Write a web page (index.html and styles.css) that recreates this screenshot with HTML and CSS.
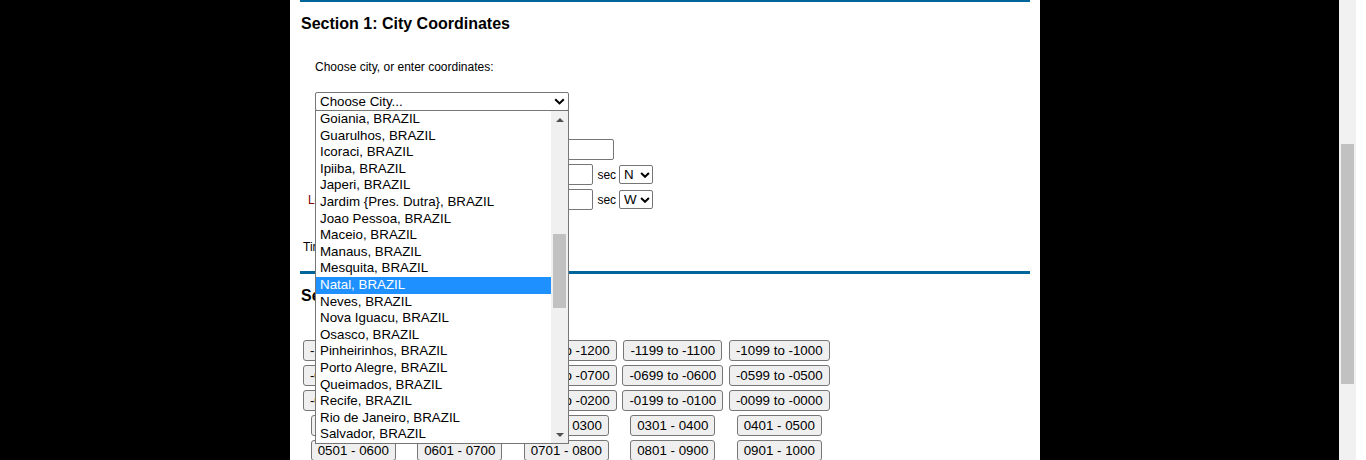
FILE: index.html
```html
<!DOCTYPE html>
<html>
<head>
<meta charset="utf-8">
<title>City Coordinates</title>
<link rel="stylesheet" href="styles.css">
</head>
<body>
<div class="gutter"></div>
<main class="page">
  <section class="sec sec1">
    <h2 class="sec-title">Section 1: City Coordinates</h2>
    <p class="hint">Choose city, or enter coordinates:</p>
    <div class="city-pick">
      <select class="city-select"><option>Choose City...</option></select>
      <svg class="chev chev-big" width="11" height="7" viewBox="0 0 11 7" aria-hidden="true"><path d="M1.2 1.2 L5.5 5.4 L9.8 1.2" fill="none" stroke="#000" stroke-width="2.1"/></svg>
      <div class="dropdown">
        <ul class="opts">
          <li>Goiania, BRAZIL</li>
          <li>Guarulhos, BRAZIL</li>
          <li>Icoraci, BRAZIL</li>
          <li>Ipiiba, BRAZIL</li>
          <li>Japeri, BRAZIL</li>
          <li>Jardim {Pres. Dutra}, BRAZIL</li>
          <li>Joao Pessoa, BRAZIL</li>
          <li>Maceio, BRAZIL</li>
          <li>Manaus, BRAZIL</li>
          <li>Mesquita, BRAZIL</li>
          <li class="sel">Natal, BRAZIL</li>
          <li>Neves, BRAZIL</li>
          <li>Nova Iguacu, BRAZIL</li>
          <li>Osasco, BRAZIL</li>
          <li>Pinheirinhos, BRAZIL</li>
          <li>Porto Alegre, BRAZIL</li>
          <li>Queimados, BRAZIL</li>
          <li>Recife, BRAZIL</li>
          <li>Rio de Janeiro, BRAZIL</li>
          <li>Salvador, BRAZIL</li>
        </ul>
        <div class="list-scroll">
          <div class="arrow-box"><span class="tri up"></span></div>
          <div class="track"><div class="thumb"></div></div>
          <div class="arrow-box"><span class="tri down"></span></div>
        </div>
      </div>
    </div>
    <div class="coords">
      <label class="lbl">Name:</label>
      <div class="fields"><input class="txt wide" type="text"></div>
      <label class="lbl">Latitude:</label>
      <div class="fields">
        <input class="txt num" type="text"><span>deg</span>
        <input class="txt num" type="text"><span>min</span>
        <input class="txt num" type="text"><span>sec</span>
        <span class="hemi-wrap">
          <select class="hemi"><option>N</option><option>S</option></select>
          <svg class="chev chev-small" width="10" height="6" viewBox="0 0 10 6" aria-hidden="true"><path d="M1.1 1.1 L5 4.8 L8.9 1.1" fill="none" stroke="#000" stroke-width="2"/></svg>
        </span>
      </div>
      <label class="lbl">Longitude:</label>
      <div class="fields">
        <input class="txt num" type="text"><span>deg</span>
        <input class="txt num" type="text"><span>min</span>
        <input class="txt num" type="text"><span>sec</span>
        <span class="hemi-wrap">
          <select class="hemi"><option>W</option><option>E</option></select>
          <svg class="chev chev-small" width="10" height="6" viewBox="0 0 10 6" aria-hidden="true"><path d="M1.1 1.1 L5 4.8 L8.9 1.1" fill="none" stroke="#000" stroke-width="2"/></svg>
        </span>
      </div>
    </div>
    <p class="tz">Time Zone (hours from GMT): -0300</p>
  </section>
  <section class="sec sec2">
    <h2 class="sec-title">Section 2: Time Zone Offset</h2>
    <div class="zones">
      <button>-1499 to -1400</button>
      <button>-1399 to -1300</button>
      <button>-1299 to -1200</button>
      <button>-1199 to -1100</button>
      <button>-1099 to -1000</button>
      <button>-0999 to -0900</button>
      <button>-0899 to -0800</button>
      <button>-0799 to -0700</button>
      <button>-0699 to -0600</button>
      <button>-0599 to -0500</button>
      <button>-0499 to -0400</button>
      <button>-0399 to -0300</button>
      <button>-0299 to -0200</button>
      <button>-0199 to -0100</button>
      <button>-0099 to -0000</button>
      <button>0001 - 0100</button>
      <button>0101 - 0200</button>
      <button>0201 - 0300</button>
      <button>0301 - 0400</button>
      <button>0401 - 0500</button>
      <button>0501 - 0600</button>
      <button>0601 - 0700</button>
      <button>0701 - 0800</button>
      <button>0801 - 0900</button>
      <button>0901 - 1000</button>
    </div>
  </section>
</main>
<div class="gutter grow"></div>
<div class="vscroll"><div class="vthumb"></div></div>
<div class="edge"></div>
</body>
</html>
```

FILE: styles.css
```css
* { box-sizing: border-box; }

html, body {
  margin: 0;
  height: 460px;
  overflow: hidden;
}

body {
  display: flex;
  background: #000;
  font-family: "Liberation Sans", Arial, sans-serif;
  font-size: 12px;
  color: #000;
}

.gutter { width: 290px; flex: none; background: #000; }
.gutter.grow { width: auto; flex: 1; }

.page {
  width: 750px;
  flex: none;
  background: #fff;
  padding: 0 10px;
  height: 460px;
  overflow: hidden;
}

.vscroll {
  width: 17px;
  flex: none;
  background: #f1f1f1;
  padding: 144px 2px 0;
}
.vthumb { height: 240px; background: #c1c1c1; }

.edge { width: 10px; flex: none; background: #fff; }

.sec { border-top: 3px solid #006699; }
.sec1 { margin-top: -1px; padding-bottom: 17px; }

.sec-title {
  margin: 13px 0 0 1px;
  font-size: 16px;
  line-height: 18px;
  font-weight: bold;
  color: #000;
}

.hint {
  margin: 27px 0 0 15px;
  line-height: 14px;
}

select, input, button {
  font-family: "Liberation Sans", Arial, sans-serif;
  font-size: 13.333px;
  color: #000;
}

.city-pick {
  position: relative;
  margin: 18px 0 0 15px;
  width: 254px;
  height: 19px;
}

.city-select {
  -webkit-appearance: none;
  appearance: none;
  display: block;
  width: 254px;
  height: 19px;
  padding: 0 0 0 4px;
  border: 1px solid #767676;
  border-radius: 2px;
  background: #fff;
  line-height: 17px;
}

.chev {
  position: absolute;
  pointer-events: none;
}
.chev-big { right: 4px; top: 6px; }
.chev-small { right: 3px; top: 7px; }

.dropdown {
  position: absolute;
  left: 0;
  top: 18px;
  width: 254px;
  height: 334px;
  border: 1px solid #767676;
  background: #fff;
  display: flex;
  z-index: 5;
}

.opts {
  list-style: none;
  margin: 0;
  padding: 0;
  flex: 1;
  font-size: 13.333px;
  overflow: hidden;
}
.opts li {
  height: 16.6px;
  line-height: 16.6px;
  padding-left: 4px;
  white-space: nowrap;
}
.opts li.sel { background: #1e90ff; color: #fff; }

.list-scroll {
  width: 17px;
  background: #f0f0f0;
  display: flex;
  flex-direction: column;
}
.arrow-box {
  height: 17px;
  display: flex;
  align-items: center;
  justify-content: center;
}
.tri {
  width: 0;
  height: 0;
  border-left: 4px solid transparent;
  border-right: 4px solid transparent;
}
.tri.up { border-bottom: 4px solid #505050; margin-top: 1px; }
.tri.down { border-top: 4px solid #505050; margin-top: 1px; }
.track { flex: 1; padding: 106px 2px 0; }
.thumb { height: 74px; background: #c1c1c1; }

.coords {
  margin-top: 28px;
  display: grid;
  grid-template-columns: 64px auto;
  column-gap: 12px;
  row-gap: 4px;
  grid-auto-rows: 21px;
}
.lbl {
  color: #800000;
  text-align: right;
  align-self: center;
  line-height: 14px;
  white-space: nowrap;
}
.fields {
  display: flex;
  align-items: center;
  gap: 4px;
}
.txt {
  height: 21px;
  border: 1px solid #767676;
  border-radius: 2px;
  padding: 1px 2px;
  background: #fff;
}
.txt.wide { width: 238px; }
.txt.num { width: 54px; }

.hemi-wrap {
  position: relative;
  display: block;
  margin-left: -1px;
}
.hemi {
  -webkit-appearance: none;
  appearance: none;
  display: block;
  width: 34px;
  height: 19px;
  border: 1px solid #767676;
  border-radius: 2px;
  padding: 0 0 0 4px;
  background: #fff;
  line-height: 17px;
}

.tz {
  margin: 30px 0 0 3px;
  line-height: 14px;
}

.zones {
  margin-top: 35px;
  display: grid;
  grid-template-columns: repeat(5, 106.5px);
  justify-items: center;
  row-gap: 4px;
}
.zones button {
  height: 21px;
  padding: 1px 6px;
  border: 1px solid #767676;
  border-radius: 3px;
  background: #efefef;
  line-height: 17px;
  white-space: nowrap;
}
```
